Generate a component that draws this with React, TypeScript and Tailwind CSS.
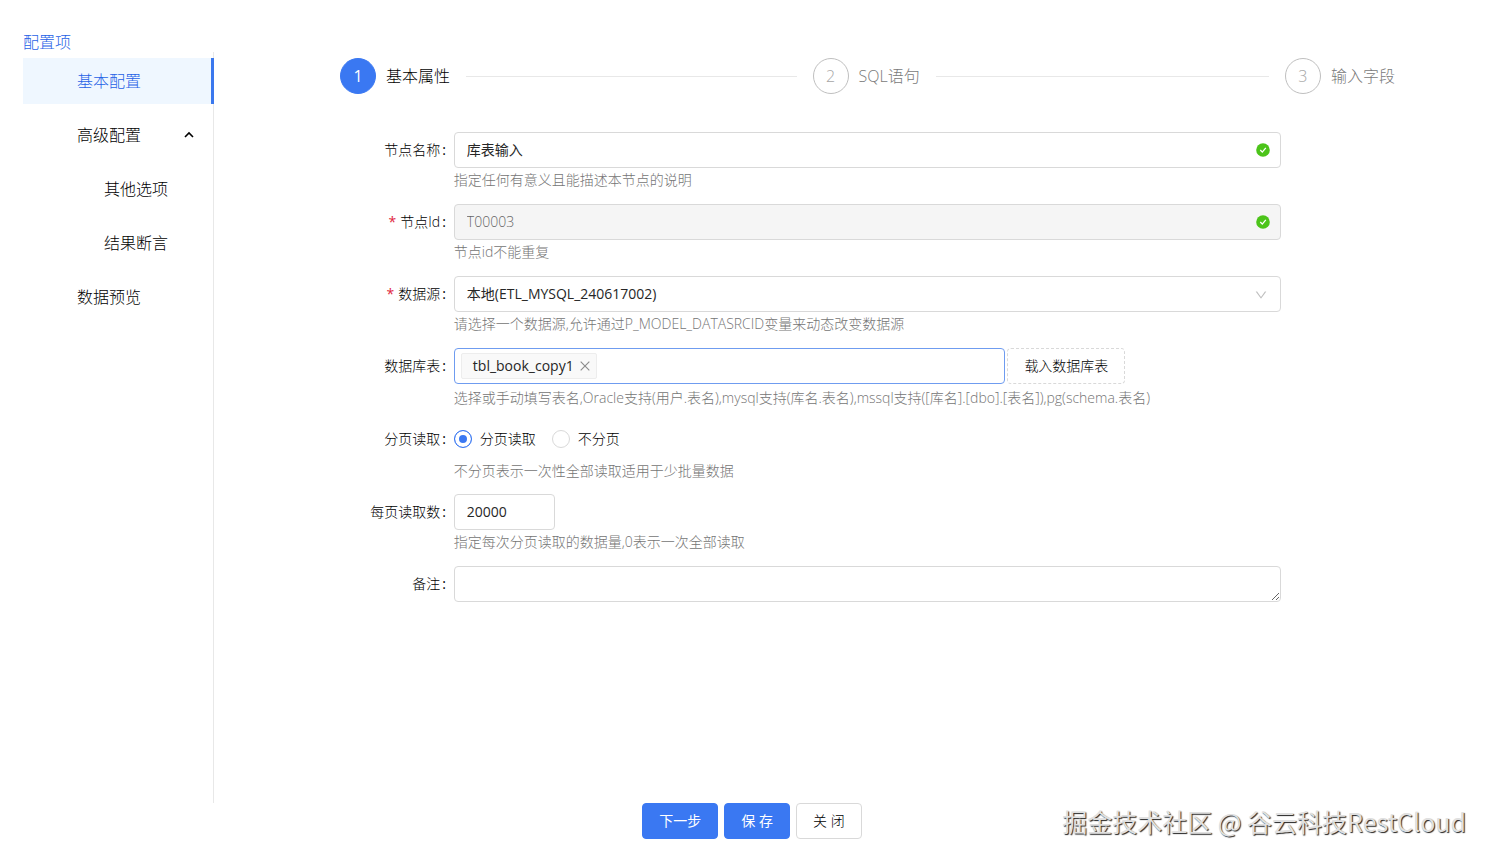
import React, { useState } from 'react';
import { AiOutlineClose, AiOutlineDown } from 'react-icons/ai';
import clsx from 'clsx';

interface MenuItem {
    key: string;
    label: string;
    nested?: boolean;
    expandable?: boolean;
}

interface FormRowProps {
    id: string;
    label: string;
    required?: boolean;
    hint?: string;
    hintClassName?: string;
    children: React.ReactNode;
}

const MENU: MenuItem[] = [
    { key: 'basic', label: '基本配置' },
    { key: 'advanced', label: '高级配置', expandable: true },
    { key: 'other', label: '其他选项', nested: true },
    { key: 'assert', label: '结果断言', nested: true },
    { key: 'preview', label: '数据预览' },
];

const STEPS = ['基本属性', 'SQL语句', '输入字段'];

const FIELD = 'block h-9 w-full rounded border border-[#d9d9d9] bg-white px-3 text-[#262626] outline-none';

function Sidebar() {
    const [active, setActive] = useState('basic');

    return (
        <aside className="flex w-[214px] shrink-0 flex-col pt-8 pl-[23px] text-base font-light">
            <h2 className="leading-5 text-[#1f62e6]">配置项</h2>
            <nav className="flex flex-1 flex-col gap-2 border-r border-[#e8e8e8] pt-1.5">
                {MENU.map((item) => (
                    <button
                        key={item.key}
                        type="button"
                        onClick={() => setActive(item.key)}
                        className={clsx(
                            '-mr-px flex h-[46px] items-center justify-between pr-5 text-left',
                            item.nested ? 'pl-[81px]' : 'pl-[54px]',
                            active === item.key
                                ? 'border-r-3 border-[#3a78ee] bg-[#eff7ff] text-[#1f62e6]'
                                : 'text-black'
                        )}
                    >
                        {item.label}
                        {item.expandable && (
                            <svg viewBox="0 0 10 10" className="size-2.5" fill="none" stroke="currentColor" strokeWidth="1.6">
                                <path d="M1 7 5 3l4 4" />
                            </svg>
                        )}
                    </button>
                ))}
            </nav>
        </aside>
    );
}

function Steps({ current }: { current: number }) {
    return (
        <ol className="mx-auto flex w-[85%] items-center text-base font-light">
            {STEPS.map((title, index) => (
                <li key={title} className={clsx('flex items-center', index < STEPS.length - 1 && 'flex-1')}>
                    <span
                        className={clsx(
                            'flex size-9 shrink-0 items-center justify-center rounded-full border',
                            index === current
                                ? 'border-[#3a78f2] bg-[#3a78f2] font-normal text-white'
                                : 'border-[#bfbfbf] text-[#a6a6a6]'
                        )}
                    >
                        {index + 1}
                    </span>
                    <span className={clsx('ml-2.5 whitespace-nowrap', index === current ? 'text-black' : 'text-[#7a7a7a]')}>
                        {title}
                    </span>
                    {index < STEPS.length - 1 && <span className="mr-4 ml-4 h-px flex-1 bg-[#e8e8e8]" />}
                </li>
            ))}
        </ol>
    );
}

function FormRow({ id, label, required, hint, hintClassName, children }: FormRowProps) {
    return (
        <div className="grid min-h-[72px] grid-cols-6">
            <label htmlFor={id} className="flex h-9 items-center justify-end pr-2 font-light text-black">
                {required && <span className="mr-1 font-normal text-[#e0263c]">*</span>}
                {label}
                <span className="ml-0.5 font-normal">:</span>
            </label>
            <div className="col-span-4">
                {children}
                {hint && <p className={clsx('leading-6 font-light text-[#757575]', hintClassName)}>{hint}</p>}
            </div>
        </div>
    );
}

function ValidMark() {
    return (
        <svg viewBox="0 0 14 14" className="pointer-events-none absolute top-[11px] right-[11px] size-3.5" fill="none">
            <circle cx="7" cy="7" r="6.8" fill="#4cc41a" />
            <path d="m4.3 7 2 2.1 3.5-4.2" stroke="white" strokeWidth="1.3" />
        </svg>
    );
}

export default function App() {
    const [tables, setTables] = useState(['tbl_book_copy1']);
    const [paging, setPaging] = useState('page');

    const removeTable = (name: string) => {
        setTables(tables.filter((t) => t !== name));
    };

    return (
        <div className="relative flex min-h-screen flex-col bg-white font-['Open_Sans','Noto_Sans_CJK_SC',sans-serif] text-sm">
            <div className="flex flex-1">
                <Sidebar />

                <main className="min-w-0 flex-1 pt-[58px] pr-0.5 pl-[33px]">
                    <Steps current={0} />

                    <form id="node-form" className="mt-[38px]" onSubmit={(e) => e.preventDefault()}>
                        <FormRow id="node-name" label="节点名称" hint="指定任何有意义且能描述本节点的说明">
                            <div className="relative">
                                <input id="node-name" defaultValue="库表输入" className={clsx(FIELD, 'pb-0.5')} />
                                <ValidMark />
                            </div>
                        </FormRow>

                        <FormRow id="node-id" label="节点Id" required hint="节点id不能重复">
                            <div className="relative">
                                <input
                                    id="node-id"
                                    value="T00003"
                                    disabled
                                    className="block h-9 w-full rounded border border-[#d9d9d9] bg-[#f5f5f5] px-3 pb-0.5 font-light text-[#666]"
                                />
                                <ValidMark />
                            </div>
                        </FormRow>

                        <FormRow
                            id="datasource"
                            label="数据源"
                            required
                            hint="请选择一个数据源,允许通过P_MODEL_DATASRCID变量来动态改变数据源"
                        >
                            <div className="relative">
                                <select id="datasource" className={clsx(FIELD, 'appearance-none')}>
                                    <option>本地(ETL_MYSQL_240617002)</option>
                                </select>
                                <AiOutlineDown className="pointer-events-none absolute top-3 right-[13px] size-3.5 text-[#bfbfbf]" />
                            </div>
                        </FormRow>

                        <FormRow
                            id="tables"
                            label="数据库表"
                            hint="选择或手动填写表名,Oracle支持(用户.表名),mysql支持(库名.表名),mssql支持([库名].[dbo].[表名]),pg(schema.表名)"
                            hintClassName="mt-0.5 mb-[11px]"
                        >
                            <div className="flex gap-0.5">
                                <div className="flex h-9 w-2/3 items-center rounded border border-[#6f9cf0] px-1.5">
                                    {tables.map((name) => (
                                        <span
                                            key={name}
                                            className="flex h-[26px] items-center gap-1 rounded-xs border border-[#ededed] bg-[#f9f9f9] pr-1 pl-[11px] text-[#262626]"
                                        >
                                            {name}
                                            <button type="button" aria-label="删除" onClick={() => removeTable(name)}>
                                                <AiOutlineClose className="size-3.5 text-[#8c8c8c]" />
                                            </button>
                                        </span>
                                    ))}
                                    <input id="tables" className="min-w-0 flex-1 outline-none" />
                                </div>
                                <button
                                    type="button"
                                    className="h-9 rounded border border-dashed border-[#d9d9d9] px-4 font-light text-black"
                                >
                                    载入数据库表
                                </button>
                            </div>
                        </FormRow>

                        <FormRow
                            id="paging-page"
                            label="分页读取"
                            hint="不分页表示一次性全部读取适用于少批量数据"
                            hintClassName="mt-0.5 mb-[11px]"
                        >
                            <div className="flex h-9 items-center gap-4 font-light text-black">
                                {[
                                    ['page', '分页读取'],
                                    ['none', '不分页'],
                                ].map(([value, text]) => (
                                    <label key={value} className="flex items-center gap-2">
                                        <input
                                            id={`paging-${value}`}
                                            type="radio"
                                            name="paging"
                                            checked={paging === value}
                                            onChange={() => setPaging(value)}
                                            className="size-[18px] appearance-none rounded-full border border-[#d9d9d9] checked:border-[#3a78f2] checked:bg-[#3a78f2] checked:shadow-[inset_0_0_0_4px_white]"
                                        />
                                        {text}
                                    </label>
                                ))}
                            </div>
                        </FormRow>

                        <FormRow id="page-size" label="每页读取数" hint="指定每次分页读取的数据量,0表示一次全部读取">
                            <div className="w-[101px]">
                                <input id="page-size" defaultValue="20000" className={clsx(FIELD, 'pb-0.5')} />
                            </div>
                        </FormRow>

                        <FormRow id="remark" label="备注">
                            <textarea id="remark" rows={1} className={clsx(FIELD, 'py-1.5')} />
                        </FormRow>
                    </form>
                </main>
            </div>

            <footer className="flex justify-center gap-1.5 pb-[22px] pl-3.5">
                <button type="button" className="h-9 rounded border border-[#3a78f2] bg-[#3a78f2] px-4 text-white">
                    下一步
                </button>
                <button type="submit" form="node-form" className="h-9 rounded border border-[#3a78f2] bg-[#3a78f2] px-4 text-white">
                    保 存
                </button>
                <button type="button" className="h-9 rounded border border-[#d9d9d9] bg-white px-4 font-light text-black">
                    关 闭
                </button>
            </footer>

            <p className="pointer-events-none absolute right-6 bottom-[22px] font-['Noto_Sans_CJK_SC',sans-serif] text-[25px] leading-9 text-[#e0e0e0] [text-shadow:1px_1px_1px_#222]">
                掘金技术社区 @ 谷云科技RestCloud
            </p>
        </div>
    );
}
